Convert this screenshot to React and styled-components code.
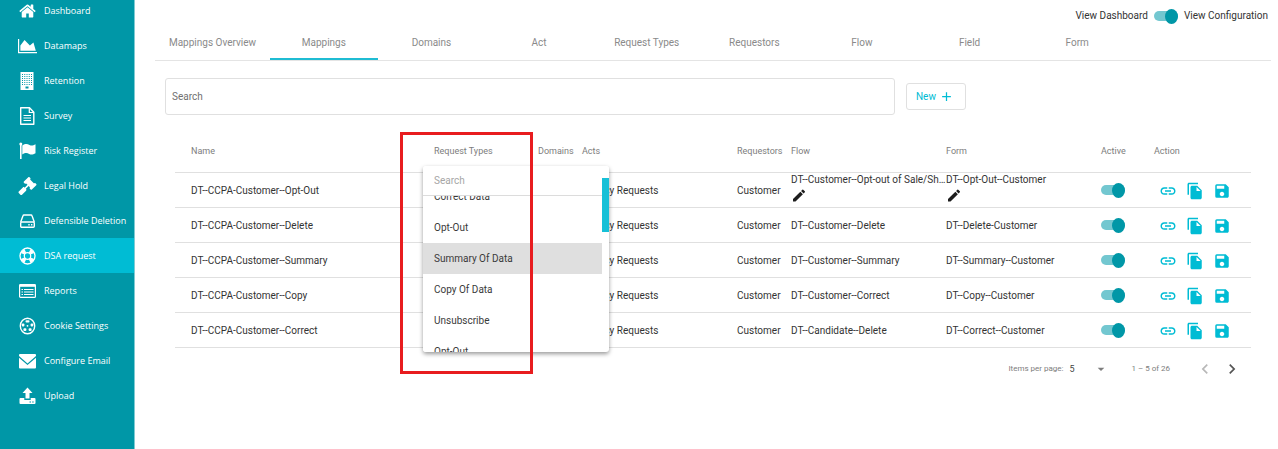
import React, { useState } from 'react';
import styled, { createGlobalStyle, css } from 'styled-components';
import { FaGavel } from 'react-icons/fa';
import {
  MdAdd,
  MdArrowDropDown,
  MdChevronLeft,
  MdChevronRight,
  MdEdit,
  MdFileCopy,
  MdLink,
  MdSave,
} from 'react-icons/md';

const GlobalStyle = createGlobalStyle`
  * {
    box-sizing: border-box;
  }

  body {
    margin: 0;
    background: #fff;
    color: #333;
    font-family: Roboto, "Liberation Sans", Arial, sans-serif;
    font-size: 10px;
    line-height: 14px;
  }

  button, input, select {
    font: inherit;
    color: inherit;
  }

  button {
    padding: 0;
    border: 0;
    background: none;
    cursor: pointer;
  }
`;

const Layout = styled.div`
  display: flex;
  height: 100vh;
  overflow: hidden;
`;

const Sidebar = styled.nav`
  flex: 0 0 135px;
  overflow: hidden;
  background: #0097a7;
  border-right: 1px solid #7fcbd3;
  font-family: "Open Sans", "Noto Sans", sans-serif;
`;

const SidebarList = styled.ul`
  margin: -7px 0 0;
  padding: 0;
  list-style: none;
`;

const SidebarLink = styled.a`
  display: flex;
  align-items: center;
  gap: 7px;
  height: 35px;
  padding-left: 18px;
  background: ${({ $active }) => ($active ? '#00bcd4' : 'transparent')};
  color: #fff;
  font-size: 9px;
  text-decoration: none;
  white-space: nowrap;

  svg {
    flex: 0 0 19px;
    width: 19px;
    height: 18px;
  }
`;

const Main = styled.main`
  flex: 1;
  min-width: 0;
  padding: 0 7px 0 20px;
`;

const ViewSwitch = styled.label`
  display: flex;
  align-items: center;
  justify-content: flex-end;
  gap: 6px;
  height: 32px;
  padding-right: 3px;
`;

const Toggle = styled.input.attrs({ type: 'checkbox', role: 'switch' })`
  appearance: none;
  display: flex;
  align-items: center;
  width: 24px;
  height: 10px;
  margin: 0;
  border-radius: 5px;
  background: #bbb;
  cursor: pointer;

  &::before {
    content: '';
    width: 13px;
    height: 15px;
    flex: none;
    border-radius: 50%;
    background: #eee;
  }

  &:checked {
    justify-content: flex-end;
    background: #73c7d0;
  }

  &:checked::before {
    background: #0097a7;
  }
`;

const Tabs = styled.div`
  display: flex;
  height: 29px;
  padding-right: 140px;
  border-bottom: 1px solid #e4e4e4;
`;

const Tab = styled.button`
  flex: 1;
  padding-bottom: 4px;
  border-bottom: 2px solid transparent;
  color: #8a8a8a;

  &:first-child {
    flex: 0 0 115px;
  }

  ${({ $active }) =>
    $active &&
    css`
      border-bottom-color: #1fbcd3;
    `}
`;

const Content = styled.section`
  padding: 17px 0 0 10px;
`;

const Toolbar = styled.div`
  display: flex;
  align-items: center;
  gap: 11px;
`;

const SearchInput = styled.input`
  width: 66%;
  height: 37px;
  padding: 0 6px;
  border: 1px solid #e0e0e0;
  border-radius: 3px;
  outline: 0;

  &::placeholder {
    color: #707070;
    opacity: 1;
  }
`;

const NewButton = styled.button`
  display: flex;
  align-items: center;
  justify-content: center;
  gap: 3px;
  width: 60px;
  height: 27px;
  padding-right: 2px;
  border: 1px solid #e0e0e0;
  border-radius: 3px;
  color: #00bcd4;

  svg {
    width: 15px;
    height: 15px;
  }
`;

const TableWrap = styled.div`
  margin: 15px 20px 0 10px;
`;

const Table = styled.table`
  width: 100%;
  border-collapse: separate;
  border-spacing: 0;
  table-layout: fixed;
`;

const Th = styled.th`
  position: relative;
  width: ${({ $width }) => ($width ? `${$width}px` : 'auto')};
  height: 43px;
  padding: 0;
  border-bottom: 1px solid #e0e0e0;
  color: #7d7d7d;
  font-size: 9px;
  font-weight: 400;
  text-align: left;

  &:first-child {
    padding-left: 16px;
  }
`;

const Td = styled.td`
  height: 35px;
  padding: 2px 0 0;
  border-bottom: 1px solid #e0e0e0;
  white-space: nowrap;

  &:first-child {
    padding-left: 16px;
  }
`;

const ToggleTd = styled(Td)`
  padding: 0;
`;

const EditableTd = styled(Td)`
  padding: ${({ $editable }) => ($editable ? '0 0 3px' : '2px 0 0')};
`;

const CellText = styled.div`
  overflow: hidden;
  text-overflow: ellipsis;
`;

const EditButton = styled.button`
  display: block;

  svg {
    display: block;
    width: 16px;
    height: 17px;
    color: #1d1d1d;
  }
`;

const Actions = styled.div`
  display: flex;
  align-items: center;
  gap: 9px;
  padding-left: 5px;
  color: #00bcd4;

  button {
    display: flex;
  }

  svg {
    width: 18px;
    height: 18px;
  }
`;

const Dropdown = styled.div`
  position: absolute;
  z-index: 2;
  top: 36px;
  left: -11px;
  width: 186px;
  overflow: hidden;
  border-radius: 3px;
  background: #fff;
  box-shadow: 0 2px 4px rgba(0, 0, 0, 0.4);
  font-size: 10px;
`;

const DropdownSearch = styled.input`
  display: block;
  width: 100%;
  height: 30px;
  padding: 0 11px;
  border: 0;
  border-bottom: 1px solid #dcdcdc;
  outline: 0;
  caret-color: #00bcd4;

  &::placeholder {
    color: #a6a6a6;
    opacity: 1;
  }
`;

const Options = styled.div`
  display: flex;
  flex-direction: column;
  justify-content: center;
  height: 156px;
  padding-right: 7px;
  overflow: hidden;
`;

const Option = styled.button`
  flex: 0 0 31px;
  padding: 0 11px;
  background: ${({ $selected }) => ($selected ? '#dfdfdf' : '#fff')};
  color: #3a3a3a;
  text-align: left;
`;

const ScrollThumb = styled.div`
  position: absolute;
  top: 12px;
  right: 0;
  width: 7px;
  height: 54px;
  background: #17c0d7;
`;

const Highlight = styled.div`
  position: absolute;
  z-index: 3;
  top: 2px;
  left: -34px;
  width: 133px;
  height: 242px;
  border: 3px solid #e81c1f;
  pointer-events: none;
`;

const Paginator = styled.div`
  display: flex;
  align-items: center;
  justify-content: flex-end;
  height: 41px;
  margin-right: 26px;
  color: #7d7d7d;
  font-size: 9px;

  label {
    display: flex;
    align-items: center;
    gap: 6px;
    font-size: 8px;
  }
`;

const PageSize = styled.span`
  display: flex;
  align-items: center;

  select {
    appearance: none;
    width: 24px;
    padding: 0;
    border: 0;
    background: none;
    color: #444;
    font-size: 9px;
  }

  svg {
    width: 16px;
    height: 16px;
  }
`;

const Range = styled.span`
  margin: 0 21px 0 22px;
  font-size: 8px;
`;

const PageButton = styled.button`
  display: flex;
  width: 27px;
  justify-content: center;
  color: #555;

  &:disabled {
    color: #b8b8b8;
  }

  svg {
    width: 20px;
    height: 20px;
  }
`;

const HomeIcon = () => (
  <svg viewBox="0 0 1792 1792" fill="currentColor">
    <path d="M1472 992v480q0 26-19 45t-45 19h-384v-384h-256v384h-384q-26 0-45-19t-19-45v-480q0-1 .5-3t.5-3l575-474 575 474q1 2 1 6zm223-69l-62 74q-8 9-21 11h-3q-13 0-21-7l-692-577-692 577q-12 8-24 7-13-2-21-11l-62-74q-8-10-7-23.5t11-21.5l719-599q32-26 76-26t76 26l244 204v-195q0-14 9-23t23-9h192q14 0 23 9t9 23v408l219 182q10 8 11 21.5t-7 23.5z" />
  </svg>
);

const AreaChartIcon = () => (
  <svg viewBox="-128 0 2048 1792" fill="currentColor">
    <path d="M1920 1536v128h-2048v-1536h128v1408h1792zm-384-1024l256 896h-1664v-576l448-576 576 576z" />
  </svg>
);

const BuildingIcon = () => (
  <svg viewBox="0 0 19 18">
    <path d="M2.500 0h13v18h-13z" fill="currentColor" />
    <path
      d="M4 2.500h10M4 4.500h10M4 6.500h10M4 8.500h10M4 10.500h10M4 12.500h10"
      stroke="#0097a7"
      strokeWidth="1"
      strokeDasharray="1 1.250"
    />
    <path d="M7.500 14.500h3v2h-3z" fill="#0097a7" />
  </svg>
);

const FileIcon = () => (
  <svg viewBox="0 0 19 18" fill="none" stroke="currentColor">
    <path d="M2.700 0.700h8.800l4.300 4.600v12h-13.100z" strokeWidth="1.400" strokeLinejoin="round" />
    <path d="M11.300 0.700v4.800h4.500" strokeWidth="1.200" />
    <path d="M5.500 8.500h7.500M5.500 11h7.500M5.500 13.500h7.500" strokeWidth="1.200" />
  </svg>
);

const FlagIcon = () => (
  <svg viewBox="0 0 19 18" fill="currentColor">
    <path d="M2 1.500h1.600v15.500h-1.600z" />
    <circle cx="2.800" cy="2" r="1.500" />
    <path d="M4.300 3.500c3-2 5-1.800 7.200-0.500 2 1 3.800 0.500 6-0.800v9c-2.500 1.500-4.300 1.700-6.300 0.700-2.200-1.100-4-1.200-6.900 0.600z" />
  </svg>
);

const DriveIcon = () => (
  <svg viewBox="0 0 19 18" fill="none" stroke="currentColor" strokeLinejoin="round">
    <path d="M2.700 10l2.300-6.300q0.200-0.700 1-0.700h7q0.800 0 1 0.700l2.300 6.300" strokeWidth="1.400" />
    <rect x="2.700" y="10" width="13.600" height="5.300" rx="1" strokeWidth="1.400" />
    <path d="M10.300 12.700h1.400M13 12.700h1.400" strokeWidth="1.400" />
  </svg>
);

const LifeRingIcon = () => (
  <svg viewBox="0 0 19 18" fill="none" stroke="currentColor">
    <ellipse cx="9.500" cy="9" rx="7.500" ry="8" strokeWidth="1.300" />
    <ellipse cx="9.500" cy="9" rx="3.200" ry="3.400" strokeWidth="1.200" />
    <ellipse
      cx="9.500"
      cy="9"
      rx="5.400"
      ry="5.800"
      strokeWidth="4"
      pathLength="80"
      strokeDasharray="9 11"
      strokeDashoffset="-5.500"
    />
  </svg>
);

const ReportIcon = () => (
  <svg viewBox="0 0 19 18" fill="none" stroke="currentColor">
    <rect x="1.600" y="2.600" width="15.800" height="12.800" rx="1" strokeWidth="1.200" />
    <path d="M1.500 3.500h16" strokeWidth="2.600" />
    <path d="M3.500 7.500h1.500M3.500 10h1.500M3.500 12.500h1.500M6 7.500h9.500M6 10h9.500M6 12.500h9.500" strokeWidth="1.200" />
  </svg>
);

const CookieIcon = () => (
  <svg viewBox="0 0 19 18" fill="currentColor">
    <ellipse cx="9.500" cy="9" rx="7.200" ry="7.800" fill="none" stroke="currentColor" strokeWidth="1.400" />
    <rect x="7.500" y="3.200" width="4" height="2.400" rx="1" />
    <rect x="3.800" y="6.500" width="2.600" height="3" rx="1" />
    <rect x="12.600" y="6.500" width="2.600" height="3" rx="1" />
    <rect x="5.400" y="11.300" width="3" height="2.600" rx="1" />
    <rect x="10.600" y="11.300" width="3" height="2.600" rx="1" />
    <circle cx="9.500" cy="8.800" r="0.900" />
  </svg>
);

const EnvelopeIcon = () => (
  <svg viewBox="0 0 19 18" fill="currentColor">
    <path d="M2 2h15q1 0 1 1v1l-8.500 7.500-8.500-7.500v-1q0-1 1-1z" />
    <path d="M1 5.800l8.500 7.200 8.500-7.200v9.700q0 1-1 1h-15q-1 0-1-1z" />
  </svg>
);

const UploadIcon = () => (
  <svg viewBox="0 0 19 18" fill="currentColor">
    <path d="M9.500 0.500l5 5.500h-3v5.500h-4v-5.500h-3z" />
    <path
      fillRule="evenodd"
      d="M2.500 11h3.800v2h6.400v-2h3.800q1 0 1 1v4q0 1-1 1h-14q-1 0-1-1v-4q0-1 1-1zM11.500 14.500v1h1.500v-1zM14.200 14.500v1h1.500v-1z"
    />
  </svg>
);

const menu = [
  { label: 'Dashboard', icon: HomeIcon },
  { label: 'Datamaps', icon: AreaChartIcon },
  { label: 'Retention', icon: BuildingIcon },
  { label: 'Survey', icon: FileIcon },
  { label: 'Risk Register', icon: FlagIcon },
  { label: 'Legal Hold', icon: FaGavel },
  { label: 'Defensible Deletion', icon: DriveIcon },
  { label: 'DSA request', icon: LifeRingIcon, active: true },
  { label: 'Reports', icon: ReportIcon },
  { label: 'Cookie Settings', icon: CookieIcon },
  { label: 'Configure Email', icon: EnvelopeIcon },
  { label: 'Upload', icon: UploadIcon },
];

const tabs = [
  'Mappings Overview',
  'Mappings',
  'Domains',
  'Act',
  'Request Types',
  'Requestors',
  'Flow',
  'Field',
  'Form',
];

const rows = [
  {
    name: 'DT--CCPA-Customer--Opt-Out',
    flow: 'DT--Customer--Opt-out of Sale/Share',
    form: 'DT--Opt-Out--Customer',
    editable: true,
  },
  { name: 'DT--CCPA-Customer--Delete', flow: 'DT--Customer--Delete', form: 'DT--Delete-Customer' },
  { name: 'DT--CCPA-Customer--Summary', flow: 'DT--Customer--Summary', form: 'DT--Summary--Customer' },
  { name: 'DT--CCPA-Customer--Copy', flow: 'DT--Customer--Correct', form: 'DT--Copy--Customer' },
  { name: 'DT--CCPA-Customer--Correct', flow: 'DT--Candidate--Delete', form: 'DT--Correct--Customer' },
];

const options = ['Correct Data', 'Opt-Out', 'Summary Of Data', 'Copy Of Data', 'Unsubscribe', 'Opt-Out'];

const RequestTypeDropdown = () => {
  const [selected, setSelected] = useState(2);

  return (
    <Dropdown>
      <DropdownSearch type="text" placeholder="Search" aria-label="Search request types" autoFocus />
      <Options role="listbox" aria-label="Request types">
        {options.map((option, i) => (
          <Option
            key={i}
            type="button"
            role="option"
            aria-selected={i === selected}
            $selected={i === selected}
            onClick={() => setSelected(i)}>
            {option}
          </Option>
        ))}
      </Options>
      <ScrollThumb />
    </Dropdown>
  );
};

const EditableCell = ({ text, editable }) => (
  <EditableTd $editable={editable}>
    <CellText>{text}</CellText>
    {editable && (
      <EditButton type="button" aria-label={`Edit ${text}`}>
        <MdEdit />
      </EditButton>
    )}
  </EditableTd>
);

const MappingRow = ({ row }) => (
  <tr>
    <Td>{row.name}</Td>
    <Td />
    <Td />
    <Td>Privacy Requests</Td>
    <Td>Customer</Td>
    <EditableCell text={row.flow} editable={row.editable} />
    <EditableCell text={row.form} editable={row.editable} />
    <ToggleTd>
      <Toggle defaultChecked aria-label={`${row.name} active`} />
    </ToggleTd>
    <Td>
      <Actions>
        <button type="button" aria-label="Link">
          <MdLink />
        </button>
        <button type="button" aria-label="Copy">
          <MdFileCopy />
        </button>
        <button type="button" aria-label="Save">
          <MdSave />
        </button>
      </Actions>
    </Td>
  </tr>
);

const App = () => {
  const [tab, setTab] = useState('Mappings');

  return (
    <Layout>
      <GlobalStyle />
      <Sidebar>
        <SidebarList>
          {menu.map(({ label, icon: Icon, active }) => (
            <li key={label}>
              <SidebarLink href="#" $active={active}>
                <Icon />
                {label}
              </SidebarLink>
            </li>
          ))}
        </SidebarList>
      </Sidebar>

      <Main>
        <ViewSwitch>
          <span>View Dashboard</span>
          <Toggle defaultChecked />
          <span>View Configuration</span>
        </ViewSwitch>

        <Tabs role="tablist">
          {tabs.map(name => (
            <Tab
              key={name}
              type="button"
              role="tab"
              aria-selected={name === tab}
              $active={name === tab}
              onClick={() => setTab(name)}>
              {name}
            </Tab>
          ))}
        </Tabs>

        <Content>
          <Toolbar>
            <SearchInput type="text" placeholder="Search" aria-label="Search mappings" />
            <NewButton type="button">
              New
              <MdAdd />
            </NewButton>
          </Toolbar>

          <TableWrap>
            <Table>
              <thead>
                <tr>
                  <Th>Name</Th>
                  <Th $width={104}>
                    Request Types
                    <RequestTypeDropdown />
                    <Highlight />
                  </Th>
                  <Th $width={44}>Domains</Th>
                  <Th $width={155}>Acts</Th>
                  <Th $width={54}>Requestors</Th>
                  <Th $width={155}>Flow</Th>
                  <Th $width={155}>Form</Th>
                  <Th $width={53}>Active</Th>
                  <Th $width={97}>Action</Th>
                </tr>
              </thead>
              <tbody>
                {rows.map(row => (
                  <MappingRow key={row.name} row={row} />
                ))}
              </tbody>
            </Table>
          </TableWrap>

          <Paginator>
            <label>
              Items per page:
              <PageSize>
                <select defaultValue="5">
                  <option>5</option>
                  <option>10</option>
                  <option>25</option>
                </select>
                <MdArrowDropDown />
              </PageSize>
            </label>
            <Range>1 – 5 of 26</Range>
            <PageButton type="button" aria-label="Previous page" disabled>
              <MdChevronLeft />
            </PageButton>
            <PageButton type="button" aria-label="Next page">
              <MdChevronRight />
            </PageButton>
          </Paginator>
        </Content>
      </Main>
    </Layout>
  );
};

export default App;
